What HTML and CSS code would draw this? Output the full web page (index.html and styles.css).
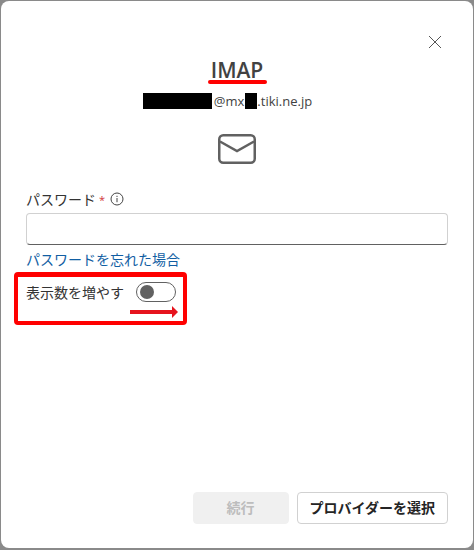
FILE: index.html
```html
<!DOCTYPE html>

<html>

  <head>
    <meta charset="utf-8">
    <link rel="stylesheet" href="styles.css">
  </head>

  <body>

    <div class="dialog">

      <div class="close-row">
        <button class="close" aria-label="close">
          <svg width="14" height="14" viewBox="0 0 14 14"><path d="M1 1L13 13M13 1L1 13" stroke="#555" stroke-width="1" fill="none"/></svg>
        </button>
      </div>

      <div class="title">IMAP<span class="title-mark"></span></div>

      <div class="account">
        <span class="mask mask-name"></span><span class="at">@mx</span><span class="mask mask-host"></span><span>.tiki.ne.jp</span>
      </div>

      <div class="mail-icon">
        <svg width="38" height="30" viewBox="0 0 38 30"><rect x="1.25" y="1.25" width="35.5" height="27.5" rx="4" stroke="#616161" stroke-width="2.5" fill="none"/><path d="M2 7.5L19 17L36 7.5" stroke="#616161" stroke-width="2.5" fill="none"/></svg>
      </div>

      <div class="field-label">
        <span>パスワード</span><span class="req">*</span>
        <svg width="14" height="14" viewBox="0 0 14 14"><circle cx="7" cy="7" r="6" stroke="#444" fill="none"/><rect x="6.5" y="6" width="1" height="4.2" fill="#444"/><rect x="6.5" y="3.8" width="1" height="1.2" fill="#444"/></svg>
      </div>
      <input class="field-input" type="password">
      <a class="forgot">パスワードを忘れた場合</a>

      <div class="more-row">
        <span>表示数を増やす</span>
        <span class="toggle"><span class="knob"></span></span>
        <span class="red-box"></span>
        <span class="red-arrow"></span>
      </div>

      <div class="actions">
        <button class="btn btn-off">続行</button>
        <button class="btn">プロバイダーを選択</button>
      </div>

    </div>

  </body>

</html>
```

FILE: styles.css
```css
* {box-sizing: border-box;}

html, body {
  height: 100%;
}

body {
  margin: 0;
  padding: 1px 1px 2px 1px;
  background-color: #8a8a8a;
  font-family: "Open Sans", "Noto Sans CJK JP", sans-serif;
  color: #333;
  overflow: hidden;
}

.dialog {
  height: 100%;
  background-color: #fff;
  border-radius: 8px;
  padding: 0 25px 24px 25px;
  display: flex;
  flex-direction: column;
}

.close-row {
  display: flex;
  justify-content: flex-end;
  padding-top: 34px;
  height: 48px;
  margin-right: 6px;
}

.close {
  border: none;
  background: none;
  padding: 0;
  height: 14px;
  line-height: 0;
}

.title {
  position: relative;
  align-self: center;
  margin-top: 7px;
  font-size: 21px;
  line-height: 28px;
  font-weight: 600;
  color: #424242;
}

.title-mark {
  position: absolute;
  left: -3px;
  right: -4px;
  bottom: 0;
  height: 4px;
  border-radius: 2px;
  background-color: #f00;
}

.account {
  display: flex;
  justify-content: center;
  align-items: center;
  margin-top: 9px;
  padding-right: 19px;
  height: 16px;
  font-size: 13px;
  line-height: 18px;
  color: #424242;
}

.at {
  padding: 0 1px 0 2px;
}

.mask {
  display: block;
  height: 16px;
  background-color: #000;
}

.mask-name {width: 69px;}
.mask-host {width: 12px;}

.mail-icon {
  display: flex;
  justify-content: center;
  margin-top: 25px;
  line-height: 0;
}

.field-label {
  display: flex;
  align-items: center;
  margin-top: 25px;
  height: 20px;
  font-size: 14px;
  color: #333;
}

.req {
  color: #d13438;
  margin: 0 5px 0 3px;
  font-size: 11px;
}

.field-input {
  display: block;
  width: 100%;
  height: 32px;
  margin-top: 4px;
  border: 1px solid #d1d1d1;
  border-bottom-color: #616161;
  border-radius: 4px;
  background-color: #fff;
}

.forgot {
  margin-top: 5px;
  font-size: 14px;
  line-height: 20px;
  color: #115ea3;
}

.more-row {
  position: relative;
  display: flex;
  align-items: center;
  gap: 12px;
  margin-top: 12px;
  height: 20px;
  font-size: 14px;
  color: #333;
}

.toggle {
  display: flex;
  align-items: center;
  width: 40px;
  height: 20px;
  padding-left: 3px;
  border: 1px solid #616161;
  border-radius: 10px;
}

.knob {
  width: 14px;
  height: 14px;
  border-radius: 50%;
  background-color: #616161;
}

.red-box {
  position: absolute;
  left: -12px;
  top: -10px;
  width: 173px;
  height: 53px;
  border: 4px solid #f00;
  border-top-width: 5px;
  border-radius: 4px;
}

.red-arrow {
  position: absolute;
  left: 104px;
  top: 28px;
  width: 42px;
  height: 4px;
  background-color: #e6141e;
}

.red-arrow::after {
  content: "";
  position: absolute;
  left: 42px;
  top: -4px;
  border-left: 6px solid #e6141e;
  border-top: 6px solid transparent;
  border-bottom: 6px solid transparent;
}

.actions {
  display: flex;
  justify-content: flex-end;
  gap: 8px;
  margin-top: auto;
}

.btn {
  height: 32px;
  padding: 0 12px 2px 12px;
  border: 1px solid #d1d1d1;
  border-radius: 4px;
  background-color: #fff;
  font-family: inherit;
  font-size: 14px;
  font-weight: 600;
  color: #242424;
}

.btn-off {
  width: 96px;
  border-color: #f0f0f0;
  background-color: #f0f0f0;
  color: #bdbdbd;
}
```
